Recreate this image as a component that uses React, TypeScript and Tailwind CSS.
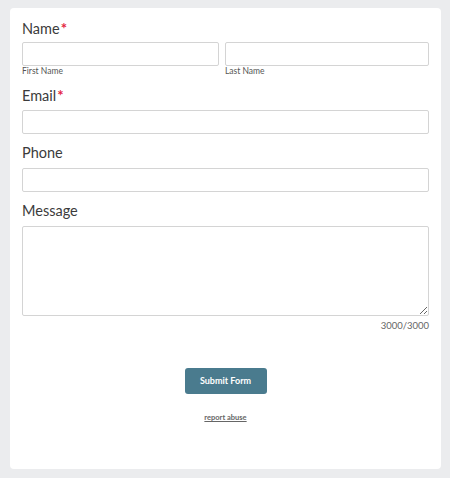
import React from "react";

const font = { fontFamily: "Lato, 'Open Sans', sans-serif" };

function Label({ text, required, mb = "mb-[5px]" }: { text: string; required?: boolean; mb?: string }) {
  return (
    <div className={`h-[20px] text-[14.5px] leading-[20px] text-[#3b3b3b] ${mb}`}>
      {text}
      {required && <span className="text-[#e3263f] ml-[1px] font-bold text-[15px]">*</span>}
    </div>
  );
}

const inputCls = "block w-full h-[24px] border border-[#d4d4d4] rounded-[2px] bg-white outline-none";

export default function App() {
  return (
    <div className="min-h-[478px] bg-[#ebecee] pt-[8px] pl-[10px] pr-[9px]" style={font}>
      <div className="h-[461px] bg-white rounded-[4px] pt-[10px] px-[12px]">
        {/* Name */}
        <Label text="Name" required mb="mb-[4px]" />
        <div className="flex gap-[6px]">
          <div className="w-[197px]">
            <input className={inputCls} />
            <div className="text-[8.5px] leading-[11px] text-[#555]">First Name</div>
          </div>
          <div className="flex-1">
            <input className={inputCls} />
            <div className="text-[8.5px] leading-[11px] text-[#555]">Last Name</div>
          </div>
        </div>

        {/* Email */}
        <div className="mt-[8px]">
          <Label text="Email" required />
          <input className={inputCls} />
        </div>

        {/* Phone */}
        <div className="mt-[9px]">
          <Label text="Phone" />
          <input className={inputCls} />
        </div>

        {/* Message */}
        <div className="mt-[9px]">
          <Label text="Message" />
          <textarea className="block w-full h-[90px] border border-[#d4d4d4] rounded-[2px] bg-white outline-none" />
          <div className="mt-[4px] text-right text-[9.5px] leading-[12px] text-[#666]">3000/3000</div>
        </div>

        <div className="mt-[36px] flex justify-center">
          <button className="w-[82px] h-[26px] rounded-[3px] bg-[#4a7b8e] text-white text-[9px] font-bold">
            Submit Form
          </button>
        </div>

        <div className="mt-[19px] text-center text-[7.5px] leading-[10px] font-bold text-[#666] underline">
          report abuse
        </div>
      </div>
    </div>
  );
}
